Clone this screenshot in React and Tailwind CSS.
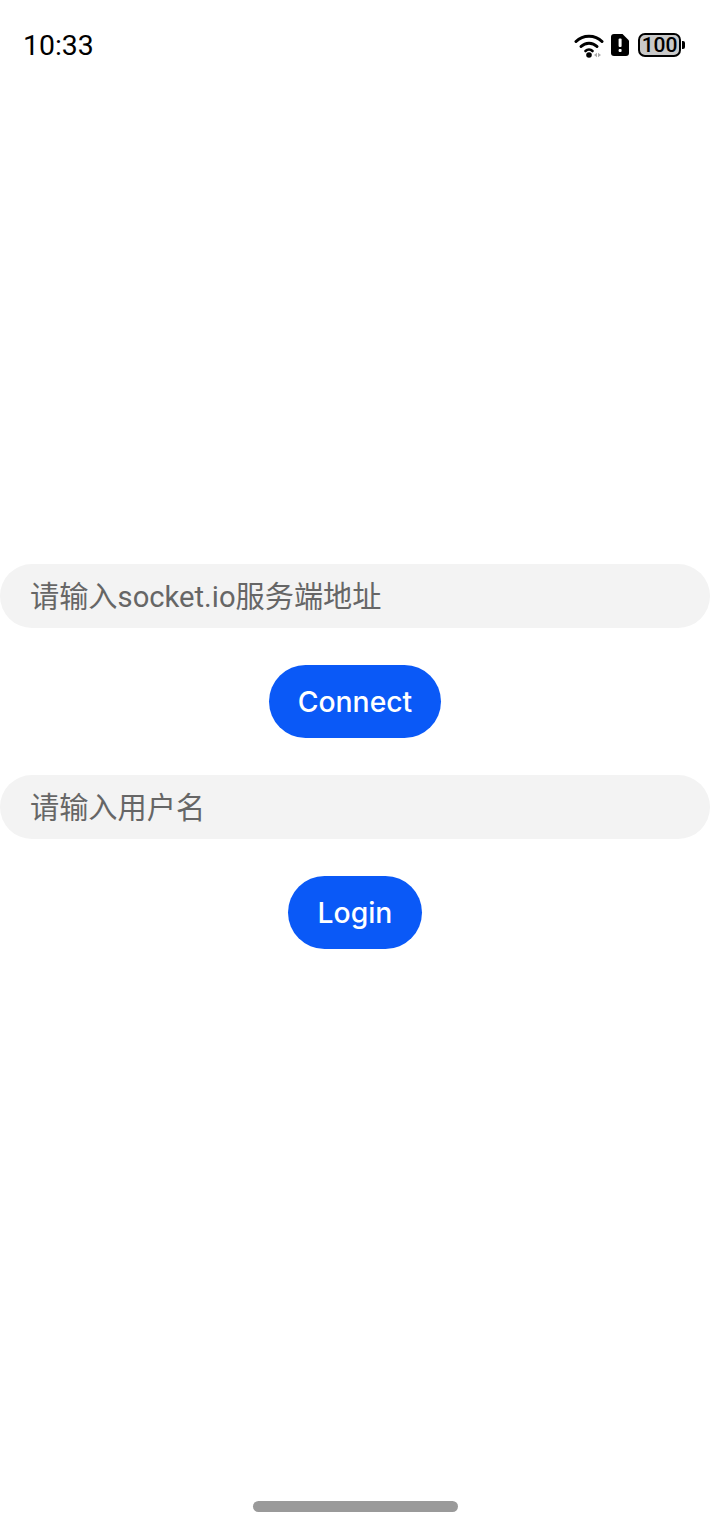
export default function App() {
  return (
    <div className="flex h-[1530px] w-[710px] flex-col overflow-hidden bg-white font-['Inter','Noto_Sans_CJK_SC',sans-serif]">
      <header className="flex h-[88px] shrink-0 items-start justify-between pl-[23px] pr-[25px] pt-[27px]">
        <span className="pt-[1px] font-['Roboto',sans-serif] text-[28.4px] leading-[36px] text-black">10:33</span>
        <div className="flex items-center pt-[5px]">
          <svg width="32" height="26" viewBox="0 0 32 26">
            <g fill="none" stroke="#000" strokeWidth="3" strokeLinecap="round">
              <path d="M2 9.5C9 2.5 21 2.5 28 9.5" />
              <path d="M7 14.5C11.5 10 18.5 10 23 14.5" />
              <path d="M11.5 19C13.5 17 16.5 17 18.5 19" strokeWidth="2.6" />
            </g>
            <circle cx="15" cy="23" r="2.8" fill="#000" />
            <path d="M20 23l3-2.2v4.4zM27 23l-3-2.2v4.4z" fill="#aaa" />
          </svg>
          <svg width="18" height="22" viewBox="0 0 18 22" className="ml-[5px]">
            <path d="M3 0H11.5L18 6.5V19a3 3 0 0 1-3 3H3a3 3 0 0 1-3-3V3a3 3 0 0 1 3-3Z" fill="#000" />
            <rect x="7.6" y="4.5" width="3" height="8.5" rx="1" fill="#fff" />
            <rect x="7.6" y="15" width="3" height="3" rx="1" fill="#fff" />
          </svg>
          <div className="ml-[9px] flex items-center">
            <div className="flex h-[24px] w-[43px] items-center justify-center rounded-[7px] border-2 border-black bg-[#c9c9c9] font-['Roboto',sans-serif] text-[21px] font-medium leading-none tracking-[-0.1px] text-black">
              100
            </div>
            <div className="ml-[1px] h-[8px] w-[3px] rounded-r-[2px] bg-black" />
          </div>
        </div>
      </header>
      <main className="flex flex-col items-center pt-[476px]">
        <input
          readOnly
          placeholder="请输入socket.io服务端地址"
          className="h-[64px] w-full rounded-full bg-[#f3f3f3] pl-[30px] pr-[30px] pt-[2px] font-['Roboto','Noto_Sans_CJK_SC',sans-serif] text-[29.2px] text-black outline-none placeholder:text-[#666666]"
        />
        <button className="mt-[37px] h-[73px] w-[172px] rounded-full bg-[#0a59f7] pt-[2px] text-[28.3px] font-medium text-white">
          Connect
        </button>
        <input
          readOnly
          placeholder="请输入用户名"
          className="mt-[37px] h-[64px] w-full rounded-full bg-[#f3f3f3] pl-[30px] pr-[30px] pt-[2px] font-['Roboto','Noto_Sans_CJK_SC',sans-serif] text-[29.2px] text-black outline-none placeholder:text-[#666666]"
        />
        <button className="mt-[37px] h-[73px] w-[134px] rounded-full bg-[#0a59f7] pt-[2px] text-[28.3px] font-medium text-white">
          Login
        </button>
      </main>
      <div className="mt-auto flex justify-center pb-[18px]">
        <div className="h-[11px] w-[205px] rounded-full bg-[#9a9a9a]" />
      </div>
    </div>
  );
}
